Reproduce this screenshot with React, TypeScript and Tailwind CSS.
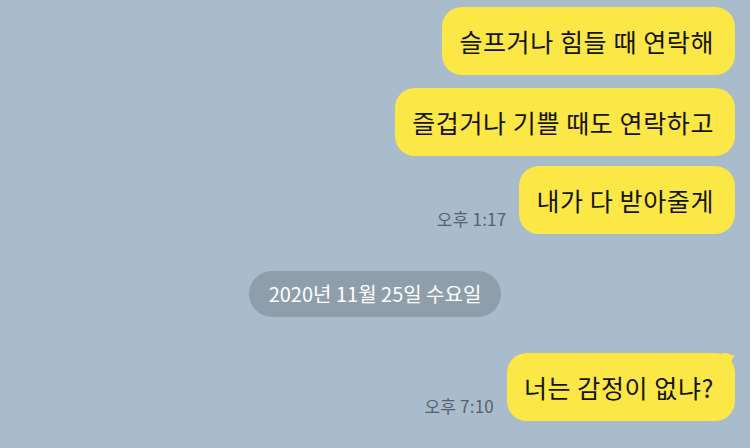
import React from "react";

const font = { fontFamily: '"Noto Sans CJK KR", "Noto Sans", sans-serif' };

function Bubble({ text, tail }: { text: string; tail?: boolean }) {
  return (
    <div className="relative rounded-[20px] bg-[#fbe746] pl-[17px] pr-[21px] h-[68px] flex items-center text-[25px] leading-[28px] tracking-[0.6px] text-[#141414]">
      {text}
      {tail && (
        <svg className="absolute right-[-5px] top-0" width="18" height="18" viewBox="0 0 18 18">
          <path d="M0 0 L5 0 Q10 3 13 2 Q9 7 7 16 L0 16 Z" fill="#fbe746" />
        </svg>
      )}
    </div>
  );
}

function Time({ t }: { t: string }) {
  return <div className="text-[17px] leading-[20px] text-[#56616b] mb-[5px] tracking-[0.2px]">{t}</div>;
}

export default function App() {
  return (
    <div style={font} className="w-[750px] h-[448px] bg-[#a9bccb] overflow-hidden flex flex-col items-end pr-[15px] pt-[7px]">
      <Bubble text="슬프거나 힘들 때 연락해" />
      <div className="mt-[13px]">
        <Bubble text="즐겁거나 기쁠 때도 연락하고" />
      </div>
      <div className="mt-[10px] flex items-end gap-[13px]">
        <Time t="오후 1:17" />
        <Bubble text="내가 다 받아줄게" />
      </div>
      <div className="self-stretch flex justify-center pl-[15px] mt-[37px]">
        <div className="h-[46px] px-[20px] rounded-full bg-[#8e9fab] text-white text-[20px] flex items-center">
          2020년 11월 25일 수요일
        </div>
      </div>
      <div className="mt-[36px] flex items-end gap-[13px]">
        <Time t="오후 7:10" />
        <Bubble text="너는 감정이 없냐?" tail />
      </div>
    </div>
  );
}
